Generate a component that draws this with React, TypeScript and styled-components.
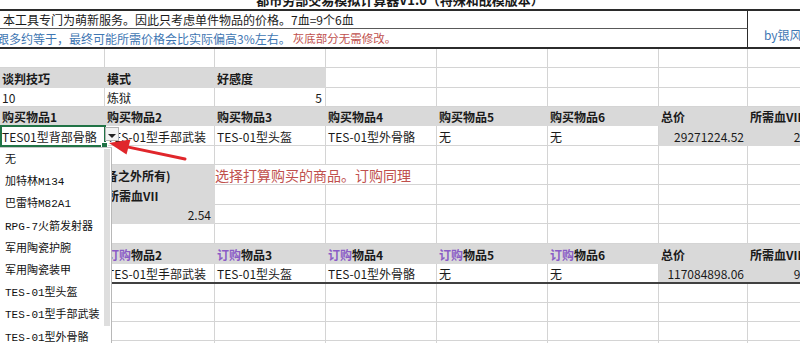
import React from 'react';
import styled, { createGlobalStyle, css } from 'styled-components';

const COLS = [105, 110, 111, 111, 111, 111, 89, 73];

const GlobalStyle = createGlobalStyle`
  html, body {
    margin: 0;
    padding: 0;
    background: #fff;
    overflow: hidden;
  }
  body {
    font-family: "Noto Sans CJK SC", "Noto Sans", sans-serif;
    font-size: 12px;
    color: #1a1a1a;
  }
`;

const Sheet = styled.div`
  position: relative;
  width: 821px;
  height: 343px;
  overflow: hidden;
`;

const TitleBar = styled.div`
  height: 9px;
  overflow: hidden;
  display: flex;
  justify-content: center;
  align-items: flex-end;
  padding-right: 21px;
  border-bottom: 2px solid #2b2b2b;
`;

const Title = styled.div`
  font-weight: 700;
  font-size: 13px;
  line-height: 16px;
  margin-bottom: 1px;
  white-space: nowrap;
`;

const Intro = styled.div`
  display: grid;
  grid-template-columns: 748px 1fr;
  grid-template-rows: 18px 18px;
  border-bottom: 2px solid #2b2b2b;
`;

const Note = styled.div<{ $first?: boolean }>`
  display: flex;
  align-items: center;
  white-space: nowrap;
  overflow: hidden;
  border-right: 1px solid #2b2b2b;
  border-bottom: ${p => (p.$first ? '1px solid #595959' : 'none')};
  padding-left: ${p => (p.$first ? '3px' : '0')};
  box-sizing: border-box;
  font-size: 12px;
`;

const Blue = styled.span`
  color: #3f77b3;
  margin-left: -3px;
`;

const Red = styled.span`
  color: #c0504d;
  font-size: 11.5px;
  margin-left: 2px;
`;

const Author = styled.div`
  grid-column: 2;
  grid-row: 1 / span 2;
  display: flex;
  align-items: flex-end;
  padding: 0 0 4px 16px;
  color: #3f77b3;
  font-size: 12px;
`;

const Row = styled.div<{ $h: number; $thick?: boolean }>`
  display: grid;
  grid-template-columns: ${COLS.map(w => `${w}px`).join(' ')};
  height: ${p => p.$h}px;
  box-sizing: border-box;
  ${p =>
    p.$thick &&
    css`
      border-bottom: 2px solid #404040;
      & > div {
        border-bottom: none;
      }
    `}
`;

const Cell = styled.div<{ $gray?: boolean; $bold?: boolean; $right?: boolean; $span?: number }>`
  grid-column: span ${p => p.$span ?? 1};
  display: flex;
  align-items: center;
  justify-content: ${p => (p.$right ? 'flex-end' : 'flex-start')};
  padding: 1px 3px 0 2px;
  box-sizing: border-box;
  min-width: 0;
  overflow: hidden;
  white-space: nowrap;
  background: ${p => (p.$gray ? '#d9d9d9' : '#fff')};
  border-right: 1px solid ${p => (p.$gray ? '#d9d9d9' : '#d4d4d4')};
  border-bottom: 1px solid ${p => (p.$gray ? '#d9d9d9' : '#d4d4d4')};
  font-weight: ${p => (p.$bold ? 700 : 400)};
  font-size: 12px;
`;

const Remark = styled(Cell)`
  color: #c0504d;
  font-size: 14px;
  padding-left: 0;
`;

const Accent = styled.span`
  color: #8a5cc6;
`;

const Selection = styled.div`
  position: absolute;
  left: 0;
  top: 125px;
  width: 106px;
  height: 22px;
  box-sizing: border-box;
  border: 2px solid #217346;
`;

const Handle = styled.div`
  position: absolute;
  right: -4px;
  bottom: -4px;
  width: 5px;
  height: 5px;
  background: #217346;
  border: 1px solid #fff;
`;

const DropButton = styled.div`
  position: absolute;
  left: 105px;
  top: 127px;
  width: 14px;
  height: 14px;
  box-sizing: border-box;
  background: #f3f3f3;
  border: 1px solid #b5b5b5;
  display: flex;
  align-items: flex-end;
  justify-content: center;
  padding-bottom: 2px;
`;

const Caret = styled.div`
  width: 0;
  height: 0;
  border-left: 4px solid transparent;
  border-right: 4px solid transparent;
  border-top: 4px solid #222;
`;

const ListBox = styled.div`
  position: absolute;
  left: 0;
  top: 147px;
  width: 112px;
  height: 200px;
  box-sizing: border-box;
  padding-top: 1px;
  background: #fff;
  border-top: 1px solid #c8c8c8;
  border-right: 1px solid #b8b8b8;
  font-family: "Liberation Mono", "Noto Sans CJK SC", monospace;
  font-size: 11px;
  color: #111;
`;

const Option = styled.div`
  height: 22.2px;
  line-height: 22.2px;
  padding-left: 5px;
  white-space: nowrap;
`;

const Thumb = styled.div`
  position: absolute;
  right: 1px;
  top: 1px;
  width: 6px;
  height: 177px;
  background: #dedede;
`;

const Pointer = styled.svg`
  position: absolute;
  left: 100px;
  top: 128px;
`;

type CellDef = {
  t?: React.ReactNode;
  gray?: boolean;
  bold?: boolean;
  right?: boolean;
  span?: number;
  remark?: boolean;
};

type RowDef = { h: number; thick?: boolean; cells: CellDef[] };

const blank = (n: number): CellDef[] => Array.from({ length: n }, () => ({}));

const buyHeads: CellDef[] = [
  ...[1, 2, 3, 4, 5, 6].map(i => ({ t: `购买物品${i}`, gray: true, bold: true })),
  { t: '总价', gray: true, bold: true },
  { t: '所需血VII', gray: true, bold: true },
];

// first column of the order block sits under the open list, so it stays empty here
const orderHeads: CellDef[] = [
  { gray: true },
  ...[2, 3, 4, 5, 6].map(i => ({
    t: (
      <>
        <Accent>订购</Accent>物品{i}
      </>
    ),
    gray: true,
    bold: true,
  })),
  { t: '总价', gray: true, bold: true },
  { t: '所需血VII', gray: true, bold: true },
];

const items = (first: string, total: string, blood: string): CellDef[] => [
  { t: first },
  { t: 'TES-01型手部武装' },
  { t: 'TES-01型头盔' },
  { t: 'TES-01型外骨骼' },
  { t: '无' },
  { t: '无' },
  { t: total, gray: true, right: true },
  { t: blood, gray: true, right: true },
];

const ROWS: RowDef[] = [
  { h: 19, cells: blank(8) },
  {
    h: 20,
    cells: [
      { t: '谈判技巧', gray: true, bold: true },
      { t: '模式', gray: true, bold: true },
      { t: '好感度', gray: true, bold: true },
      ...blank(5),
    ],
  },
  { h: 19, cells: [{ t: '10' }, { t: '炼狱' }, { t: '5', right: true }, ...blank(5)] },
  { h: 19, cells: buyHeads },
  { h: 20, cells: items('TES01型背部骨骼', '29271224.52', '2.54') },
  { h: 19, cells: blank(8) },
  {
    h: 20,
    cells: [
      { t: '订购总所需血VII(装备之外所有)', gray: true, bold: true, span: 2 },
      { t: '选择打算购买的商品。订购同理', remark: true, span: 2 },
      ...blank(4),
    ],
  },
  { h: 20, cells: [{ gray: true }, { t: '所需血VII', gray: true, bold: true }, ...blank(6)] },
  { h: 19, cells: [{ gray: true }, { t: '2.54', gray: true, right: true }, ...blank(6)] },
  { h: 20, cells: blank(8) },
  { h: 20, cells: orderHeads },
  { h: 20, thick: true, cells: items('', '117084898.06', '9.76') },
  { h: 19, cells: blank(8) },
  { h: 19, cells: blank(8) },
  { h: 19, cells: blank(8) },
  { h: 19, cells: blank(8) },
];

const OPTIONS = [
  '无',
  '加特林M134',
  '巴雷特M82A1',
  'RPG-7火箭发射器',
  '军用陶瓷护腕',
  '军用陶瓷装甲',
  'TES-01型头盔',
  'TES-01型手部武装',
  'TES-01型外骨骼',
];

const App: React.FC = () => (
  <>
    <GlobalStyle />
    <Sheet>
      <TitleBar>
        <Title>都市劳部交易模拟计算器V1.0（特殊和战模版本）</Title>
      </TitleBar>
      <Intro>
        <Note $first>本工具专门为萌新服务。因此只考虑单件物品的价格。7血=9个6血</Note>
        <Note>
          <Blue>跟多约等于，最终可能所需价格会比实际偏高3%左右。</Blue>
          <Red>灰底部分无需修改。</Red>
        </Note>
        <Author>by银风</Author>
      </Intro>
      {ROWS.map((row, r) => (
        <Row key={r} $h={row.h} $thick={row.thick}>
          {row.cells.map((c, i) =>
            c.remark ? (
              <Remark key={i} $span={c.span}>
                {c.t}
              </Remark>
            ) : (
              <Cell key={i} $gray={c.gray} $bold={c.bold} $right={c.right} $span={c.span}>
                {c.t}
              </Cell>
            ),
          )}
        </Row>
      ))}

      <Selection>
        <Handle />
      </Selection>
      <DropButton>
        <Caret />
      </DropButton>
      <ListBox>
        {OPTIONS.map(o => (
          <Option key={o}>{o}</Option>
        ))}
        <Thumb />
      </ListBox>
      <Pointer width="90" height="40" viewBox="0 0 90 40">
        <line x1="85" y1="31" x2="26" y2="18.6" stroke="#e0262b" strokeWidth="3" strokeLinecap="round" />
        <polygon points="9,15 30.5,11.5 26.5,26.5" fill="#e0262b" />
      </Pointer>
    </Sheet>
  </>
);

export default App;
